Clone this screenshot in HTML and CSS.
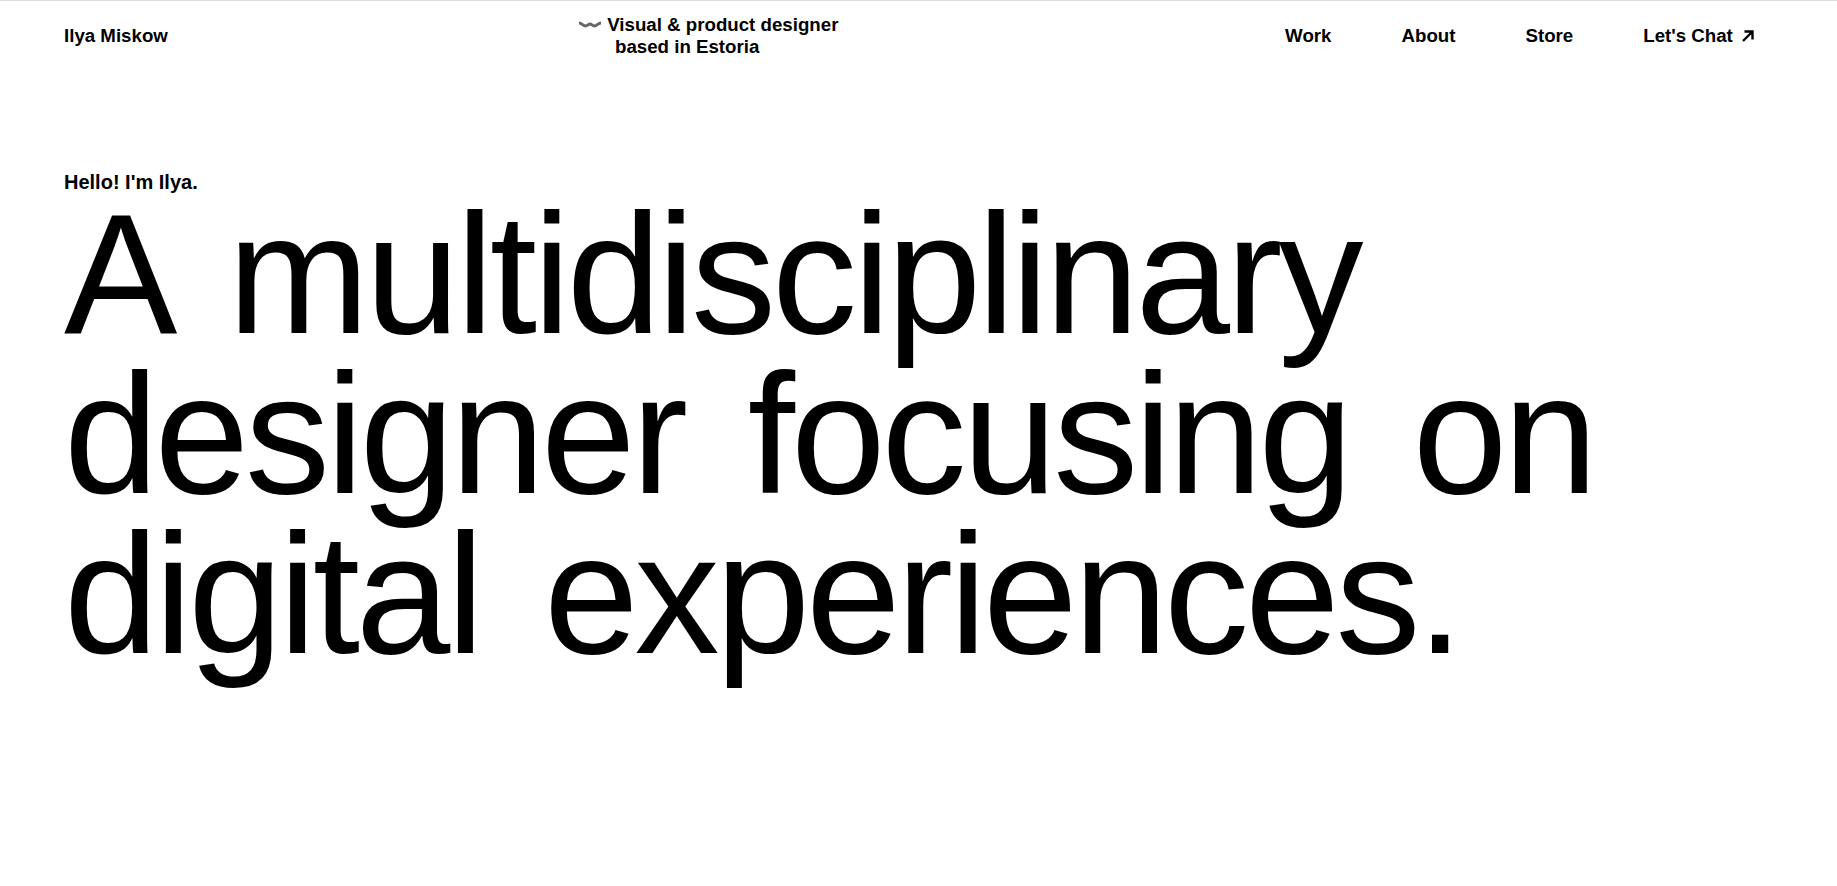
FILE: index.html
```html
<!DOCTYPE html>
<html lang="en">
<head>
    <meta charset="UTF-8">
    <meta name="viewport" content="width=device-width, initial-scale=1.0">
    <title>Ilya Miskow</title>
    <link rel="stylesheet" href="styles.css">
</head>
<body>
    <header class="site-header">
        <a href="#" class="brand">Ilya Miskow</a>
        <p class="tagline">
            <span class="tagline-first">
                <svg class="wave" width="22" height="7" viewBox="0 0 22 7" aria-hidden="true"><path d="M0 2 C3 2 4 5 6.500 5 C8.500 5 9.500 3 11 3 C12.500 3 13.500 5 15.500 5 C18 5 19 2 22 2" fill="none" stroke="#666" stroke-width="3"/></svg>
                Visual &amp; product designer
            </span>
            <span class="tagline-second">based in Estoria</span>
        </p>
        <nav class="main-nav">
            <a href="#">Work</a>
            <a href="#">About</a>
            <a href="#">Store</a>
            <a href="#" class="chat-link">Let's Chat
                <svg width="12" height="12" viewBox="0 0 12 12" aria-hidden="true"><path d="M1 11 L10 2 M2.500 1.500 H10.500 V9.500" fill="none" stroke="#000" stroke-width="2.400"/></svg>
            </a>
        </nav>
    </header>

    <main class="hero">
        <p class="hello">Hello! I'm Ilya.</p>
        <h1 class="headline">A multidisciplinary designer focusing on digital experiences.</h1>
    </main>
</body>
</html>
```

FILE: styles.css
```css
body {
    margin: 0;
    padding: 0;
    background-color: #fff;
    color: #000;
    font-family: "Liberation Sans", Arial, sans-serif;
    font-size: 18.7px;
    font-weight: 700;
    border-top: 1px solid #ddd;
}

a {
    color: #000;
    text-decoration: none;
}

.site-header {
    display: flex;
    justify-content: space-between;
    align-items: center;
    height: 70px;
    padding: 0 83px 0 64px;
}

.brand {
    width: 515px;
}

.tagline {
    margin: 0;
    line-height: 22px;
    flex: 1;
}

.tagline-first,
.tagline-second {
    display: block;
}

.tagline-second {
    padding-left: 36px;
}

.wave {
    margin-right: 1px;
    vertical-align: 3px;
}

.main-nav {
    display: flex;
    gap: 70px;
}

.chat-link svg {
    margin-left: 4px;
}

.hero {
    padding: 99px 64px 120px;
}

.hello {
    margin: 0;
    font-size: 20px;
    line-height: 24px;
}

.headline {
    margin: 0;
    font-size: 170px;
    font-weight: 400;
    line-height: 160px;
    letter-spacing: -4px;
    word-spacing: 20.500px;
}
```
